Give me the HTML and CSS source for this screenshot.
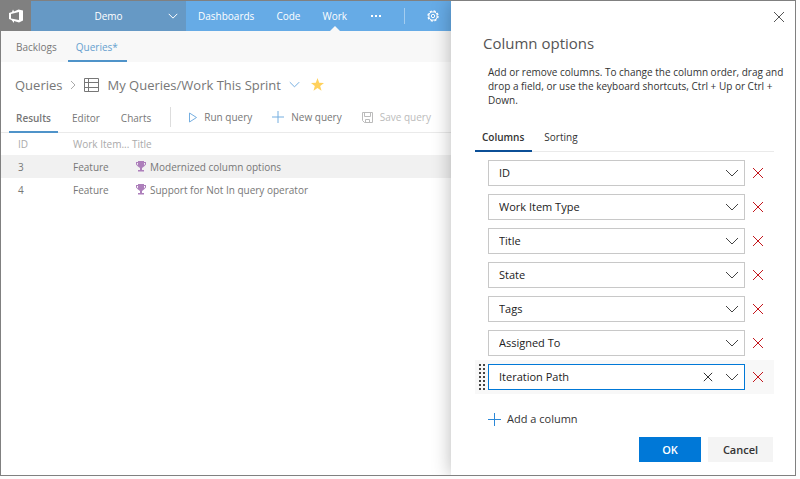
FILE: index.html
```
<!DOCTYPE html>
<html lang="en">
<head>
    <meta charset="UTF-8">
    <meta name="viewport" content="width=device-width, initial-scale=1.0">
    <title>Column options</title>
    <link rel="stylesheet" href="styles.css">
</head>
<body>

<!-- Shared icons -->
<svg class="sprite" aria-hidden="true">
    <symbol id="chevron" viewBox="0 0 14 8"><path d="M1 1l6 6 6-6"/></symbol>
    <symbol id="cross" viewBox="0 0 12 12"><path d="M1 1l10 10M11 1L1 11"/></symbol>
    <symbol id="plus" viewBox="0 0 13 13"><path d="M6.5 0v13M0 6.5h13"/></symbol>
    <symbol id="trophy" viewBox="0 0 10 11">
        <path d="M2 0h6v1h2v2.500L8 5.500 6 7v2h2v1.500H2V9h2V7L2 5.500 0 3.500V1h2zM1 2v1.300l1 .9V2zm7 0v2.200l1-.9V2z"/>
    </symbol>
</svg>

<div class="app">
    <main class="workspace">
        <header class="topbar">
            <a class="logo" href="#" aria-label="Home">
                <svg width="16" height="16" viewBox="0 0 16 16">
                    <path fill="#fff" fill-rule="evenodd" d="M1 5l3-1 1-2.500L6 3.500l4.500-2L15 2.500v10L11 14.500 6 13v2L3.500 12 1 11zM3 6v4.500l8 1.500V4z"/>
                </svg>
            </a>
            <button class="project" type="button">
                <span>Demo</span>
                <svg class="line" width="10" height="6"><use href="#chevron"/></svg>
            </button>
            <nav class="hubs">
                <a href="#">Dashboards</a>
                <a href="#">Code</a>
                <a class="active" href="#">Work</a>
                <a class="more" href="#" aria-label="More"><i></i><i></i><i></i></a>
            </nav>
            <button class="settings" type="button" aria-label="Settings">
                <svg width="12" height="12" viewBox="0 0 12 12">
                    <circle cx="6" cy="6" r="5" fill="none" stroke="#fff" stroke-width="1.400" stroke-dasharray="2.200 1.727"/>
                    <circle cx="6" cy="6" r="4.100" fill="none" stroke="#fff"/>
                    <circle cx="6" cy="6" r="1.700" fill="none" stroke="#fff"/>
                </svg>
            </button>
        </header>

        <nav class="subnav">
            <a href="#">Backlogs</a>
            <a class="active" href="#">Queries*</a>
        </nav>

        <div class="breadcrumb">
            <a href="#">Queries</a>
            <svg class="line sep" width="6" height="10" viewBox="0 0 6 10"><path d="M1 1l4 4-4 4"/></svg>
            <svg class="line" width="15" height="14" viewBox="0 0 15 14"><path d="M.5.5h14v13H.5zM.5 4.500h14M.5 9.500h14M4.500.5v13"/></svg>
            <h1>My Queries/Work This Sprint</h1>
            <svg class="line blue" width="11" height="7"><use href="#chevron"/></svg>
            <svg class="star" width="13" height="13" viewBox="0 0 13 13"><path d="M6.500 0L8.200 4.700 13 4.900 9.200 7.900 10.500 12.700 6.500 10 2.500 12.700 3.800 7.900 0 4.900 4.800 4.700z"/></svg>
        </div>

        <div class="toolbar">
            <nav class="pivots">
                <a class="active" href="#">Results</a>
                <a href="#">Editor</a>
                <a href="#">Charts</a>
            </nav>
            <div class="commands">
                <button type="button">
                    <svg class="line blue" width="8" height="11" viewBox="0 0 8 11"><path d="M.5 1v9L7.500 5.500z"/></svg>
                    Run query
                </button>
                <button type="button">
                    <svg class="line blue" width="12" height="12"><use href="#plus"/></svg>
                    New query
                </button>
                <button type="button" disabled>
                    <svg class="line" width="11" height="11" viewBox="0 0 11 11"><path d="M.5.5h10v10h-8l-2-2zM2.500.5v4h6v-4M3.500 10.500v-3h4v3"/></svg>
                    Save query
                </button>
            </div>
        </div>

        <table class="results">
            <thead>
                <tr><th class="id">ID</th><th class="type">Work Item...</th><th>Title</th></tr>
            </thead>
            <tbody>
                <tr class="selected">
                    <td>3</td>
                    <td>Feature</td>
                    <td><a href="#"><svg width="10" height="11"><use href="#trophy"/></svg>Modernized column options</a></td>
                </tr>
                <tr>
                    <td>4</td>
                    <td>Feature</td>
                    <td><a href="#"><svg width="10" height="11"><use href="#trophy"/></svg>Support for Not In query operator</a></td>
                </tr>
            </tbody>
        </table>
    </main>

    <aside class="panel">
        <button class="close" type="button" aria-label="Close"><svg class="line" width="12" height="12"><use href="#cross"/></svg></button>
        <h2>Column options</h2>
        <p>Add or remove columns. To change the column order, drag and drop a field, or use the keyboard shortcuts, Ctrl + Up or Ctrl + Down.</p>

        <nav class="tabs">
            <a class="active" href="#">Columns</a>
            <a href="#">Sorting</a>
        </nav>

        <ul class="fields">
            <li>
                <div class="combo">
                    <select aria-label="Column 1"><option>ID</option></select>
                    <svg class="line arrow" width="14" height="8"><use href="#chevron"/></svg>
                </div>
                <button class="remove" type="button" aria-label="Remove ID"><svg class="line" width="12" height="12"><use href="#cross"/></svg></button>
            </li>
            <li>
                <div class="combo">
                    <select aria-label="Column 2"><option>Work Item Type</option></select>
                    <svg class="line arrow" width="14" height="8"><use href="#chevron"/></svg>
                </div>
                <button class="remove" type="button" aria-label="Remove Work Item Type"><svg class="line" width="12" height="12"><use href="#cross"/></svg></button>
            </li>
            <li>
                <div class="combo">
                    <select aria-label="Column 3"><option>Title</option></select>
                    <svg class="line arrow" width="14" height="8"><use href="#chevron"/></svg>
                </div>
                <button class="remove" type="button" aria-label="Remove Title"><svg class="line" width="12" height="12"><use href="#cross"/></svg></button>
            </li>
            <li>
                <div class="combo">
                    <select aria-label="Column 4"><option>State</option></select>
                    <svg class="line arrow" width="14" height="8"><use href="#chevron"/></svg>
                </div>
                <button class="remove" type="button" aria-label="Remove State"><svg class="line" width="12" height="12"><use href="#cross"/></svg></button>
            </li>
            <li>
                <div class="combo">
                    <select aria-label="Column 5"><option>Tags</option></select>
                    <svg class="line arrow" width="14" height="8"><use href="#chevron"/></svg>
                </div>
                <button class="remove" type="button" aria-label="Remove Tags"><svg class="line" width="12" height="12"><use href="#cross"/></svg></button>
            </li>
            <li>
                <div class="combo">
                    <select aria-label="Column 6"><option>Assigned To</option></select>
                    <svg class="line arrow" width="14" height="8"><use href="#chevron"/></svg>
                </div>
                <button class="remove" type="button" aria-label="Remove Assigned To"><svg class="line" width="12" height="12"><use href="#cross"/></svg></button>
            </li>
            <li class="current">
                <span class="grip"></span>
                <div class="combo">
                    <select aria-label="Column 7"><option>Iteration Path</option></select>
                    <button class="clear" type="button" aria-label="Clear"><svg class="line" width="10" height="10"><use href="#cross"/></svg></button>
                    <svg class="line arrow" width="14" height="8"><use href="#chevron"/></svg>
                </div>
                <button class="remove" type="button" aria-label="Remove Iteration Path"><svg class="line" width="12" height="12"><use href="#cross"/></svg></button>
            </li>
        </ul>

        <button class="add" type="button"><svg class="line" width="13" height="13"><use href="#plus"/></svg>Add a column</button>

        <div class="actions">
            <button class="ok" type="button">OK</button>
            <button type="button">Cancel</button>
        </div>
    </aside>
</div>

</body>
</html>
```
FILE: styles.css
```
* {
    box-sizing: border-box;
}
body {
    margin: 0;
    padding: 0 4px 3px 0;
    background: #fdfdfd;
    font-family: "Open Sans", "Noto Sans", sans-serif;
    font-size: 10px;
    line-height: 14px;
    color: #333;
}
a {
    color: inherit;
    text-decoration: none;
}
button {
    padding: 0;
    border: none;
    background: none;
    font: inherit;
    color: inherit;
    cursor: pointer;
}
svg {
    flex: none;
    display: block;
}
svg path {
    vector-effect: non-scaling-stroke;
}
.sprite {
    display: none;
}
.line {
    fill: none;
    stroke: currentColor;
}
.app {
    display: flex;
    min-height: calc(100vh - 3px);
    border: 1px solid #808080;
    background: #fff;
}
.workspace {
    flex: 1;
    min-width: 0;
    color: #777;
}

/* Top bar */
.topbar {
    display: flex;
    height: 30px;
    background: #66abe6;
    color: #fff;
}
.logo {
    display: flex;
    align-items: center;
    justify-content: center;
    width: 30px;
    background: #808080;
}
.project {
    display: flex;
    align-items: center;
    width: 155px;
    padding: 0 8px 0 18px;
    background: #6699c5;
}
.project span {
    flex: 1;
}
.hubs {
    display: flex;
    gap: 22px;
    padding: 0 23px 0 12px;
    line-height: 30px;
}
.hubs .active {
    position: relative;
}
.hubs .active::after {
    content: "";
    position: absolute;
    bottom: 0;
    left: calc(50% - 5px);
    border: 5px solid transparent;
    border-top: none;
    border-bottom-color: #f8f8f8;
}
.more {
    display: flex;
    align-items: center;
    gap: 2px;
    margin-left: 2px;
}
.more i {
    width: 2px;
    height: 2px;
    background: #fff;
}
.settings {
    display: flex;
    align-items: center;
}
.settings::before {
    content: "";
    width: 1px;
    height: 16px;
    margin-right: 22px;
    background: #a3cdf0;
}

/* Sub navigation */
.subnav {
    display: flex;
    gap: 2px;
    padding-left: 7px;
    background: #f8f8f8;
}
.subnav a {
    padding: 9px 9px 6px 8px;
    border-bottom: 2px solid transparent;
}
.subnav .active {
    color: #669fcf;
    border-color: #4f93c9;
}

.breadcrumb {
    display: flex;
    align-items: center;
    gap: 8px;
    height: 45px;
    padding-left: 14px;
    font-size: 13px;
}
.breadcrumb h1 {
    margin: 0;
    font-size: 13px;
    font-weight: 400;
}
.sep {
    color: #aaa;
}
.blue {
    color: #75aee0;
}
.star {
    margin-left: 3px;
    fill: #ffd15c;
}

/* Result tabs and commands */
.toolbar {
    display: flex;
    height: 26px;
    border-bottom: 1px solid #eaeaea;
}
.pivots {
    display: flex;
    gap: 7px;
    padding-left: 8px;
}
.pivots a {
    height: 26px;
    padding: 4px 7px 0;
}
.pivots .active {
    border-bottom: 2px solid #4f93c9;
    font-weight: 600;
}
.commands {
    display: flex;
    gap: 20px;
    height: 20px;
    margin-left: 12px;
    padding-left: 18px;
    border-left: 1px solid #ddd;
}
.commands button {
    display: flex;
    align-items: center;
    gap: 7px;
    white-space: nowrap;
}
.commands button:disabled {
    color: #bbb;
}

.results {
    width: 100%;
    table-layout: fixed;
    border-collapse: collapse;
    text-align: left;
    white-space: nowrap;
}
.results th,
.results td {
    height: 23px;
    padding: 0 0 0 4px;
    font-weight: 400;
}
.results th {
    height: 22px;
    color: #aaa;
}
.results .id {
    width: 68px;
}
.results .type {
    width: 59px;
}
.results tr > :first-child {
    padding-left: 17px;
}
.results .selected {
    background: #f1f1f1;
}
.results td a {
    display: flex;
    align-items: center;
    gap: 4px;
    padding-left: 4px;
}
.results svg {
    fill: #ad7fbb;
}

/* Side panel */
.panel {
    width: 344px;
    padding: 10px 21px 12px 24px;
    background: #fff;
    box-shadow: 0 0 18px rgba(0, 0, 0, 0.28);
    clip-path: inset(0 0 0 -20px);
}
.close {
    display: block;
    margin: 0 -11px 0 auto;
    color: #555;
}
.panel h2 {
    margin: 9px 0 11px 8px;
    font-size: 15px;
    font-weight: 400;
    line-height: 22px;
    color: #555;
}
/* The intro may run into the right padding */
.panel p {
    margin: 0 -18px 21px 13px;
}
.tabs {
    display: flex;
    gap: 5px;
    border-bottom: 1px solid #eaeaea;
}
.tabs a {
    margin-bottom: -1px;
    padding: 2px 8px 6px 7px;
}
.tabs .active {
    border-bottom: 2px solid #0b4f97;
    font-weight: 600;
}
.fields {
    margin: 4px 0 0;
    padding: 0;
    list-style: none;
}
.fields li {
    position: relative;
    display: flex;
    align-items: center;
    gap: 7px;
    height: 34px;
    padding: 0 10px 0 13px;
}
.fields .current {
    background: #f8f8f8;
}
/* Two columns of square dots */
.grip {
    position: absolute;
    left: 4px;
    top: 4px;
    width: 8px;
    height: 26px;
    background: conic-gradient(at 2px 2px, transparent 75%, #444 0) 0 0 / 4px 4px;
}
.combo {
    position: relative;
    flex: 1;
}
.combo select {
    display: block;
    width: 100%;
    height: 26px;
    padding: 0 50px 0 10px;
    appearance: none;
    border: 1px solid #c8c8c8;
    border-radius: 0;
    background: #fff;
    font: inherit;
    font-size: 11px;
    color: #222;
}
.current select {
    border-color: #0078d7;
}
.combo .arrow {
    position: absolute;
    top: 9px;
    right: 6px;
    color: #444;
    pointer-events: none;
}
.clear {
    position: absolute;
    top: 8px;
    right: 32px;
    color: #333;
}
.remove {
    color: #c4161c;
}
.add {
    display: flex;
    align-items: center;
    gap: 6px;
    margin: 18px 0 0 13px;
    font-size: 11px;
}
.add svg {
    color: #2b88d8;
}
.actions {
    display: flex;
    justify-content: flex-end;
    gap: 7px;
    margin-top: 11px;
    padding-right: 1px;
}
.actions button {
    width: 65px;
    height: 25px;
    background: #f4f4f4;
    font-size: 11px;
    font-weight: 600;
}
.actions .ok {
    width: 62px;
    background: #0078d7;
    color: #fff;
}
```
